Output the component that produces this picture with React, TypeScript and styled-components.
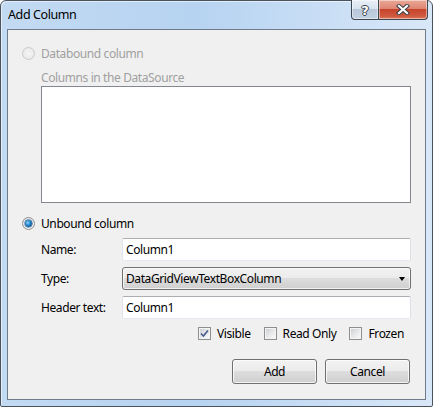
import React from 'react';
import styled, { createGlobalStyle } from 'styled-components';

const GlobalStyle = createGlobalStyle`
  html, body {
    margin: 0;
    padding: 0;
    background: #ffffff;
  }
  body {
    font-family: "Noto Sans", "Open Sans", sans-serif;
    font-size: 12px;
    letter-spacing: -0.4px;
    color: #000000;
  }
`;

const Window = styled.div`
  width: 433px;
  height: 407px;
  box-sizing: border-box;
  border: 1px solid #4b535d;
  border-radius: 6px 6px 2px 2px;
  background: linear-gradient(90deg, #c3daf3 0%, #b6d3f1 45%, #c9def5 75%, #d9e8f8 100%);
  box-shadow: inset 1px 1px 0 rgba(255, 255, 255, 0.55);
  padding: 0 6px 6px;
  display: flex;
  flex-direction: column;
`;

const TitleBar = styled.div`
  height: 28px;
  display: flex;
  align-items: flex-start;
  flex-shrink: 0;
`;

const Title = styled.span`
  line-height: 28px;
  padding-left: 1px;
  font-size: 12.5px;
`;

const CaptionButtons = styled.div`
  display: flex;
  height: 20px;
  margin: -1px -2px 0 auto;
`;

const CaptionButton = styled.div<{ $kind: 'help' | 'close' }>`
  box-sizing: border-box;
  height: 20px;
  width: ${(p) => (p.$kind === 'help' ? '28px' : '49px')};
  border: 1px solid #3e4650;
  border-top: none;
  border-left: ${(p) => (p.$kind === 'close' ? 'none' : '1px solid #3e4650')};
  border-radius: ${(p) => (p.$kind === 'help' ? '0 0 0 4px' : '0 0 4px 0')};
  background: ${(p) =>
    p.$kind === 'help'
      ? 'linear-gradient(#e8eff7 0%, #d8e3ef 45%, #b7c7d9 50%, #c3d2e2 100%)'
      : 'linear-gradient(#eaa897 0%, #de8672 45%, #c8432c 50%, #cf5a40 85%, #e07c5e 100%)'};
  box-shadow: inset 0 0 0 1px rgba(255, 255, 255, 0.45);
  display: flex;
  align-items: center;
  justify-content: center;
`;

const HelpGlyph = styled.span`
  font-family: "DejaVu Sans", sans-serif;
  font-weight: bold;
  font-size: 13px;
  letter-spacing: 0;
  line-height: 1;
  color: #ffffff;
  margin-top: 1px;
  text-shadow: 1px 0 0 #3b4350, -1px 0 0 #3b4350, 0 1px 0 #3b4350, 0 -1px 0 #3b4350;
`;

const Client = styled.div`
  flex: 1;
  border: 1px solid #6f7b88;
  background: #f0f0f0;
  padding: 17px 14px 0;
  display: flex;
  flex-direction: column;
`;

const RadioRow = styled.div<{ $disabled?: boolean; $gap?: number }>`
  display: flex;
  align-items: center;
  gap: 6px;
  height: 13px;
  margin-top: ${(p) => p.$gap ?? 0}px;
  color: ${(p) => (p.$disabled ? '#a0a0a0' : '#000000')};
`;

const Radio = styled.span<{ $disabled?: boolean; $checked?: boolean }>`
  position: relative;
  width: 13px;
  height: 13px;
  box-sizing: border-box;
  border-radius: 50%;
  border: 1px solid ${(p) => (p.$disabled ? '#cacaca' : '#8e8f8f')};
  background: ${(p) =>
    p.$disabled
      ? 'radial-gradient(circle at 50% 50%, #f4f4f4 0%, #e6e6e6 100%)'
      : 'radial-gradient(circle at 60% 65%, #ffffff 0%, #d8dadf 100%)'};
  flex-shrink: 0;

  &::after {
    content: '';
    display: ${(p) => (p.$checked ? 'block' : 'none')};
    position: absolute;
    left: 2px;
    top: 2px;
    width: 7px;
    height: 7px;
    border-radius: 50%;
    background: radial-gradient(circle at 40% 40%, #8fd4ff 0%, #1f7fc2 45%, #0c3e74 100%);
    box-shadow: 0 0 0 0.5px #1b4f80;
  }
`;

const Caption = styled.div`
  margin: 10px 0 1px 19px;
  line-height: 15px;
  color: #a0a0a0;
`;

const ListBox = styled.div`
  margin-left: 19px;
  height: 117px;
  box-sizing: border-box;
  border: 1px solid #828790;
  background: #ffffff;
`;

const FieldGrid = styled.div`
  display: grid;
  grid-template-columns: 81px 1fr;
  row-gap: 6px;
  align-items: center;
  margin: 8px 0 0 19px;
`;

const FieldLabel = styled.label`
  line-height: 15px;
`;

const TextBox = styled.input`
  height: 23px;
  box-sizing: border-box;
  border: 1px solid;
  border-color: #abadb3 #dbdfe6 #e3e9ef #e2e3ea;
  border-radius: 2px;
  background: #ffffff;
  padding: 0 3px;
  margin: 0;
  font: inherit;
  letter-spacing: inherit;
  color: #000000;
  outline: none;
`;

const ComboBox = styled.div`
  height: 23px;
  box-sizing: border-box;
  border: 1px solid #707070;
  border-radius: 3px;
  background: linear-gradient(#f2f2f2 0%, #ebebeb 50%, #dddddd 50%, #cfcfcf 100%);
  box-shadow: inset 0 0 0 1px rgba(255, 255, 255, 0.7);
  display: flex;
  align-items: center;
  justify-content: space-between;
  padding: 0 5px 0 3px;
`;

const DropArrow = styled.span`
  width: 0;
  height: 0;
  border-left: 3.5px solid transparent;
  border-right: 3.5px solid transparent;
  border-top: 4px solid #000000;
`;

const CheckRow = styled.div`
  display: flex;
  justify-content: flex-end;
  align-items: center;
  gap: 13px;
  height: 13px;
  margin-top: 8px;
  padding-right: 7px;
`;

const CheckItem = styled.label`
  display: flex;
  align-items: center;
  gap: 6px;
`;

const CheckBox = styled.span`
  width: 13px;
  height: 13px;
  box-sizing: border-box;
  border: 1px solid #8e8f8f;
  background: linear-gradient(135deg, #c9ccd1 0%, #e9eaec 55%, #fbfbfb 100%);
  box-shadow: inset 0 0 0 1px #f4f4f4;
  display: flex;
  align-items: center;
  justify-content: center;
`;

const ButtonRow = styled.div`
  display: flex;
  justify-content: flex-end;
  gap: 8px;
  margin-top: 19px;
  padding-right: 1px;
`;

const Button = styled.button`
  width: 85px;
  height: 25px;
  box-sizing: border-box;
  border: 1px solid #707070;
  border-radius: 3px;
  background: linear-gradient(#f2f2f2 0%, #ebebeb 50%, #dddddd 50%, #cfcfcf 100%);
  box-shadow: inset 0 0 0 1px rgba(255, 255, 255, 0.75);
  font: inherit;
  letter-spacing: inherit;
  color: #000000;
  padding: 0;
`;

const CloseIcon = () => (
  <svg width="14" height="11" viewBox="0 0 14 11">
    <path d="M3 2 L11 9 M11 2 L3 9" stroke="#3a3f48" strokeWidth="4.2" strokeLinecap="square" />
    <path d="M3 2 L11 9 M11 2 L3 9" stroke="#ffffff" strokeWidth="2.2" strokeLinecap="square" />
  </svg>
);

const CheckMark = () => (
  <svg width="9" height="9" viewBox="0 0 9 9">
    <path d="M1 4.5 L3.4 7 L8 1.5" fill="none" stroke="#4b5f8e" strokeWidth="1.7" />
  </svg>
);

export default function App() {
  return (
    <>
      <GlobalStyle />
      <Window>
        <TitleBar>
          <Title>Add Column</Title>
          <CaptionButtons>
            <CaptionButton $kind="help">
              <HelpGlyph>?</HelpGlyph>
            </CaptionButton>
            <CaptionButton $kind="close">
              <CloseIcon />
            </CaptionButton>
          </CaptionButtons>
        </TitleBar>
        <Client>
          <RadioRow $disabled>
            <Radio $disabled />
            <span>Databound column</span>
          </RadioRow>
          <Caption>Columns in the DataSource</Caption>
          <ListBox />
          <RadioRow $gap={14}>
            <Radio $checked />
            <span>Unbound column</span>
          </RadioRow>
          <FieldGrid>
            <FieldLabel>Name:</FieldLabel>
            <TextBox defaultValue="Column1" />
            <FieldLabel>Type:</FieldLabel>
            <ComboBox>
              <span>DataGridViewTextBoxColumn</span>
              <DropArrow />
            </ComboBox>
            <FieldLabel>Header text:</FieldLabel>
            <TextBox defaultValue="Column1" />
          </FieldGrid>
          <CheckRow>
            <CheckItem>
              <CheckBox>
                <CheckMark />
              </CheckBox>
              Visible
            </CheckItem>
            <CheckItem>
              <CheckBox />
              Read Only
            </CheckItem>
            <CheckItem>
              <CheckBox />
              Frozen
            </CheckItem>
          </CheckRow>
          <ButtonRow>
            <Button>Add</Button>
            <Button>Cancel</Button>
          </ButtonRow>
        </Client>
      </Window>
    </>
  );
}
